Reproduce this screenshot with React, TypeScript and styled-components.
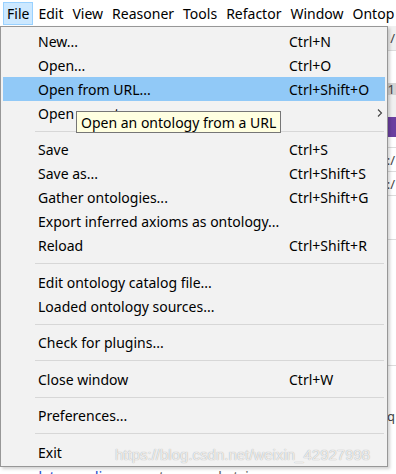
import styled, { createGlobalStyle } from "styled-components";

type Item = {
  label: string;
  shortcut?: string;
  submenu?: boolean;
  active?: boolean;
};

type Entry = Item | "sep";

const fileMenu: Entry[] = [
  { label: "New...", shortcut: "Ctrl+N" },
  { label: "Open...", shortcut: "Ctrl+O" },
  { label: "Open from URL...", shortcut: "Ctrl+Shift+O", active: true },
  { label: "Open recent", submenu: true },
  "sep",
  { label: "Save", shortcut: "Ctrl+S" },
  { label: "Save as...", shortcut: "Ctrl+Shift+S" },
  { label: "Gather ontologies...", shortcut: "Ctrl+Shift+G" },
  { label: "Export inferred axioms as ontology..." },
  { label: "Reload", shortcut: "Ctrl+Shift+R" },
  "sep",
  { label: "Edit ontology catalog file..." },
  { label: "Loaded ontology sources..." },
  "sep",
  { label: "Check for plugins..." },
  "sep",
  { label: "Close window", shortcut: "Ctrl+W" },
  "sep",
  { label: "Preferences..." },
  "sep",
  { label: "Exit" },
];

const menuBar = ["File", "Edit", "View", "Reasoner", "Tools", "Refactor", "Window", "Ontop"];

const GlobalStyle = createGlobalStyle`
  html, body {
    margin: 0;
    padding: 0;
    background: #fff;
    overflow: hidden;
  }
  body {
    font-family: "Noto Sans", "Open Sans", sans-serif;
  }
`;

const Screen = styled.div`
  position: relative;
  width: 396px;
  height: 474px;
  overflow: hidden;
  background: #fff;
`;

const Bar = styled.div`
  display: flex;
  align-items: center;
  gap: 1px;
  height: 26px;
  padding-left: 3px;
  background: #fff;
  font-size: 14px;
  color: #000;
  white-space: nowrap;
`;

const BarItem = styled.div<{ $open?: boolean }>`
  display: flex;
  align-items: center;
  height: 21px;
  padding: 0 3px;
  border: 1px solid ${(p) => (p.$open ? "#99d1ff" : "transparent")};
  background: ${(p) => (p.$open ? "#cce8ff" : "transparent")};
`;

/* the editor window that the menu hangs over */
const Workspace = styled.div`
  display: flex;
  flex-direction: column;
  font-size: 13px;
  color: #444;
`;

const Strip = styled.div<{ $h: number; $bg?: string; $line?: boolean }>`
  height: ${(p) => p.$h}px;
  background: ${(p) => p.$bg ?? "#fff"};
  border-bottom: ${(p) => (p.$line ? "1px solid #dcdcdc" : "none")};
  display: flex;
  align-items: center;
  justify-content: flex-end;
  padding-right: 1px;
  overflow: hidden;
  white-space: nowrap;
`;

const AnnotationRow = styled.div`
  display: flex;
  gap: 16px;
  padding-left: 33px;
  font-size: 15px;
  line-height: 20px;
  white-space: nowrap;
`;

const PropName = styled.span`
  color: #2a4fd0;
  text-decoration: underline;
`;

const PropType = styled.span`
  color: #666;
`;

const Popup = styled.div`
  position: absolute;
  top: 26px;
  left: 0;
  width: 388px;
  box-sizing: border-box;
  border: 1px solid #979797;
  background: #f2f2f2;
  padding: 2px;
  box-shadow: 2px 2px 3px rgba(0, 0, 0, 0.18);
  font-size: 14px;
  color: #000;
`;

const Row = styled.div<{ $active?: boolean }>`
  display: grid;
  grid-template-columns: 251px 1fr 6px;
  align-items: center;
  height: 24px;
  padding: 0 2px 0 35px;
  background: ${(p) => (p.$active ? "#91c9f7" : "transparent")};
  white-space: nowrap;
`;

const Chevron = styled.svg`
  display: block;
  width: 6px;
  height: 8px;
`;

const Separator = styled.div`
  height: 12.5px;
  display: flex;
  align-items: center;
  padding: 0 1px 0 32px;

  &::after {
    content: "";
    flex: 1;
    height: 1px;
    background: #d7d7d7;
  }
`;

const Tooltip = styled.div`
  position: absolute;
  left: 76px;
  top: 111px;
  height: 20px;
  padding: 0 4px;
  display: flex;
  align-items: center;
  background: #ffffe1;
  border: 1px solid #767676;
  font-size: 14px;
  color: #000;
  white-space: nowrap;
`;

const Watermark = styled.div`
  position: absolute;
  left: 115px;
  top: 446px;
  font-family: "Liberation Sans", Arial, sans-serif;
  font-size: 15px;
  color: rgba(255, 255, 255, 0.8);
  text-shadow: 0 0 1px rgba(0, 0, 0, 0.4);
  white-space: nowrap;
  pointer-events: none;
`;

export default function App() {
  return (
    <Screen>
      <GlobalStyle />
      <Bar>
        {menuBar.map((m, i) => (
          <BarItem key={m} $open={i === 0}>
            {m}
          </BarItem>
        ))}
      </Bar>

      <Workspace>
        <Strip $h={24} $bg="#f0f0f0" $line>
          /
        </Strip>
        <Strip $h={32} />
        <Strip $h={12} $bg="#d4d4d4">
          e1
        </Strip>
        <Strip $h={22} $bg="#f0f0f0" />
        <Strip $h={20} $bg="#6b3fa0" />
        <Strip $h={10} $line />
        <Strip $h={23} $line>
          :/
        </Strip>
        <Strip $h={23} $line>
          :/
        </Strip>
        <Strip $h={43} $line />
        <Strip $h={125} $line />
        <Strip $h={100}>q</Strip>
        <AnnotationRow>
          <PropName>dcterms:license</PropName>
          <PropType>type: xsd:string</PropType>
        </AnnotationRow>
      </Workspace>

      <Popup>
        {fileMenu.map((e, i) =>
          e === "sep" ? (
            <Separator key={i} />
          ) : (
            <Row key={i} $active={e.active}>
              <span>{e.label}</span>
              <span>{e.shortcut ?? ""}</span>
              {e.submenu ? (
                <Chevron viewBox="0 0 6 8">
                  <polyline points="1,0.5 4.5,4 1,7.5" fill="none" stroke="#444" strokeWidth="1.1" />
                </Chevron>
              ) : (
                <span />
              )}
            </Row>
          )
        )}
      </Popup>

      <Tooltip>Open an ontology from a URL</Tooltip>
      <Watermark>https://blog.csdn.net/weixin_42927998</Watermark>
    </Screen>
  );
}
